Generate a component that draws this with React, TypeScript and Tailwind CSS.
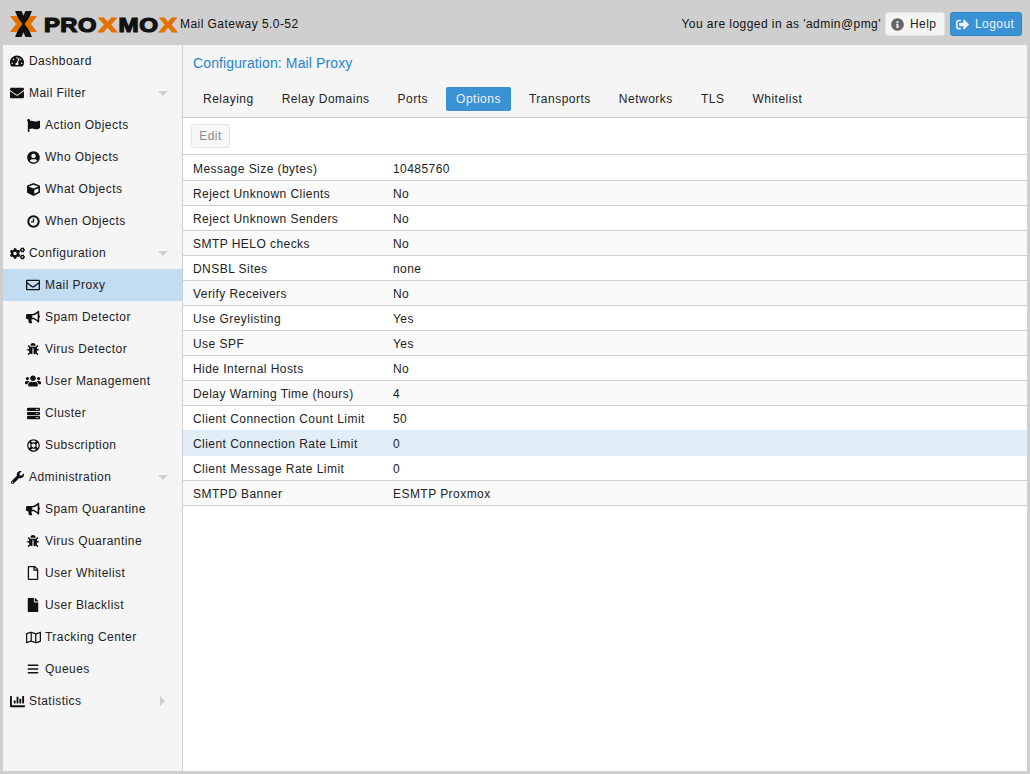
import type { JSX } from "react";
import {
  FaBars,
  FaBug,
  FaBullhorn,
  FaChartBar,
  FaCogs,
  FaCube,
  FaEnvelope,
  FaFile,
  FaFlag,
  FaInfoCircle,
  FaRegEnvelope,
  FaRegFile,
  FaRegLifeRing,
  FaRegMap,
  FaServer,
  FaSignOutAlt,
  FaTachometerAlt,
  FaUserCircle,
  FaUsers,
  FaWrench,
} from "react-icons/fa";

interface NavItem {
  icon: JSX.Element;
  label: string;
  child?: boolean;
  arrow?: "down" | "right";
  active?: boolean;
}

// the FA version in the package has a thin clock, the reference one is heavier
function ClockIcon() {
  return (
    <svg width="13" height="13" viewBox="0 0 13 13" fill="none" stroke="currentColor">
      <circle cx="6.500" cy="6.500" r="5.200" strokeWidth="2" />
      <path d="M6.500 3.500v3.300H4" strokeWidth="1.300" />
    </svg>
  );
}

const navItems: NavItem[] = [
  { icon: <FaTachometerAlt size={14} />, label: "Dashboard" },
  { icon: <FaEnvelope size={14} />, label: "Mail Filter", arrow: "down" },
  { icon: <FaFlag size={13} />, label: "Action Objects", child: true },
  { icon: <FaUserCircle size={13} />, label: "Who Objects", child: true },
  { icon: <FaCube size={13} />, label: "What Objects", child: true },
  { icon: <ClockIcon />, label: "When Objects", child: true },
  { icon: <FaCogs size={15} />, label: "Configuration", arrow: "down" },
  { icon: <FaRegEnvelope size={14} />, label: "Mail Proxy", child: true, active: true },
  { icon: <FaBullhorn size={14} />, label: "Spam Detector", child: true },
  { icon: <FaBug size={12} />, label: "Virus Detector", child: true },
  { icon: <FaUsers size={16} />, label: "User Management", child: true },
  { icon: <FaServer size={13} />, label: "Cluster", child: true },
  { icon: <FaRegLifeRing size={13} />, label: "Subscription", child: true },
  { icon: <FaWrench size={13} />, label: "Administration", arrow: "down" },
  { icon: <FaBullhorn size={14} />, label: "Spam Quarantine", child: true },
  { icon: <FaBug size={12} />, label: "Virus Quarantine", child: true },
  { icon: <FaRegFile size={14} />, label: "User Whitelist", child: true },
  { icon: <FaFile size={14} />, label: "User Blacklist", child: true },
  { icon: <FaRegMap size={15} />, label: "Tracking Center", child: true },
  { icon: <FaBars size={12} />, label: "Queues", child: true },
  { icon: <FaChartBar size={15} />, label: "Statistics", arrow: "right" },
];

const tabs = ["Relaying", "Relay Domains", "Ports", "Options", "Transports", "Networks", "TLS", "Whitelist"];

const rows = [
  ["Message Size (bytes)", "10485760"],
  ["Reject Unknown Clients", "No"],
  ["Reject Unknown Senders", "No"],
  ["SMTP HELO checks", "No"],
  ["DNSBL Sites", "none"],
  ["Verify Receivers", "No"],
  ["Use Greylisting", "Yes"],
  ["Use SPF", "Yes"],
  ["Hide Internal Hosts", "No"],
  ["Delay Warning Time (hours)", "4"],
  ["Client Connection Count Limit", "50"],
  ["Client Connection Rate Limit", "0"],
  ["Client Message Rate Limit", "0"],
  ["SMTPD Banner", "ESMTP Proxmox"],
];

function Logo() {
  const font = "'Liberation Sans', sans-serif";
  return (
    <svg width="168" height="26" viewBox="0 0 168 26" className="shrink-0">
      <path d="M5 0h6.500l2 4.500 2-4.500H22l-5.500 13L22 26h-6.500l-2-4.500-2 4.500H5l5.500-13L5 0z" fill="#111" />
      <path d="M0 5h6.500l6 8-6 8H0l6-8-6-8zM27 5h-6.500l-6 8 6 8H27l-6-8 6-8z" fill="#e57000" />
      <text x="34" y="21" fontFamily={font} fontWeight="700" fontSize="19.500" stroke="#111" strokeWidth="1.200" fill="#111" textLength="53" lengthAdjust="spacingAndGlyphs">PRO</text>
      <text x="88.500" y="21" fontFamily={font} fontWeight="700" fontSize="19.500" stroke="#e57000" strokeWidth="1.200" fill="#e57000" textLength="19" lengthAdjust="spacingAndGlyphs">X</text>
      <text x="108.500" y="21" fontFamily={font} fontWeight="700" fontSize="19.500" stroke="#111" strokeWidth="1.200" fill="#111" textLength="40" lengthAdjust="spacingAndGlyphs">MO</text>
      <text x="149.500" y="21" fontFamily={font} fontWeight="700" fontSize="19.500" stroke="#e57000" strokeWidth="1.200" fill="#e57000" textLength="18" lengthAdjust="spacingAndGlyphs">X</text>
    </svg>
  );
}

function Header() {
  return (
    <header className="h-[42px] flex items-center pl-[7px] pr-[5px] text-[12px] text-[#111]">
      <Logo />
      <span className="ml-[2px]">Mail Gateway 5.0-52</span>
      <span className="ml-auto mr-[4px]">You are logged in as 'admin@pmg'</span>
      <button className="h-[24px] w-[60px] pl-[5px] flex items-center gap-[6px] bg-[#f5f5f5] border border-[#e4e4e4] rounded-[3px] text-[#222]">
        <FaInfoCircle className="text-[13px] text-[#666]" />
        Help
      </button>
      <button className="ml-[5px] h-[24px] w-[72px] pl-[5px] flex items-center gap-[6px] bg-[#3892d4] border border-[#2f86c6] rounded-[3px] text-[#f0f4f8]">
        <FaSignOutAlt className="text-[13px]" />
        Logout
      </button>
    </header>
  );
}

function Sidebar() {
  return (
    <nav className="w-[180px] shrink-0 bg-[#f5f5f5] border-r border-[#cfcfcf]">
      {navItems.map((item) => (
        <div
          key={item.label}
          className={`h-[32px] flex items-center pr-[14px] ${item.child ? "pl-[22px]" : "pl-[6px]"} ${item.active ? "bg-[#c2ddf2]" : ""}`}
        >
          <span className="w-[16px] flex justify-center text-[#111]">{item.icon}</span>
          <span className="ml-[4px] text-[#222]">{item.label}</span>
          {item.arrow === "down" && (
            <span className="ml-auto border-x-[5px] border-x-transparent border-t-[5px] border-t-[#cfcfcf]" />
          )}
          {item.arrow === "right" && (
            <span className="ml-auto mr-[3px] border-y-[5px] border-y-transparent border-l-[5px] border-l-[#cfcfcf]" />
          )}
        </div>
      ))}
    </nav>
  );
}

function Content() {
  return (
    <main className="flex-1 min-w-0 flex flex-col bg-white">
      <div className="h-[73px] bg-[#f5f5f5] border-b border-[#cfcfcf] px-[10px]">
        <h1 className="pt-[9px] text-[14px] leading-[18px] font-normal tracking-[0.12px] text-[#2585cf]">Configuration: Mail Proxy</h1>
        <div className="mt-[15px] flex gap-[8px] tracking-[0.5px]">
          {tabs.map((tab) => (
            <span
              key={tab}
              className={`h-[24px] px-[10px] flex items-center rounded-[2px] ${tab === "Options" ? "bg-[#3892d4] text-[#f0f4f8]" : "text-[#222]"}`}
            >
              {tab}
            </span>
          ))}
        </div>
      </div>
      <div className="h-[37px] border-b border-[#cfcfcf] flex items-center pl-[8px]">
        <button className="h-[24px] w-[39px] bg-[#f8f8f8] border border-[#e6e6e6] rounded-[3px] text-[#8a8a8a]">Edit</button>
      </div>
      {rows.map(([name, value], i) => (
        <div
          key={name}
          className={`shrink-0 flex items-center border-b px-[10px] ${i === 0 ? "h-[26px] pt-[3px]" : "h-[25px] pt-[2px]"} ${i === 10 || i === 11 ? "border-[#e2eef7]" : "border-[#d0d0d0]"} ${i === 11 ? "bg-[#e2eef7]" : i % 2 === 1 ? "bg-[#fafafa]" : "bg-white"}`}
        >
          <span className="w-[200px] shrink-0">{name}</span>
          <span>{value}</span>
        </div>
      ))}
    </main>
  );
}

export default function App() {
  return (
    <div className="w-[1030px] h-[774px] overflow-hidden bg-[#cfcfcf] p-[3px] flex flex-col font-['Liberation_Sans',Arial,sans-serif] text-[12px] tracking-[0.45px] text-[#222]">
      <Header />
      <div className="flex flex-1 min-h-0">
        <Sidebar />
        <Content />
      </div>
    </div>
  );
}
